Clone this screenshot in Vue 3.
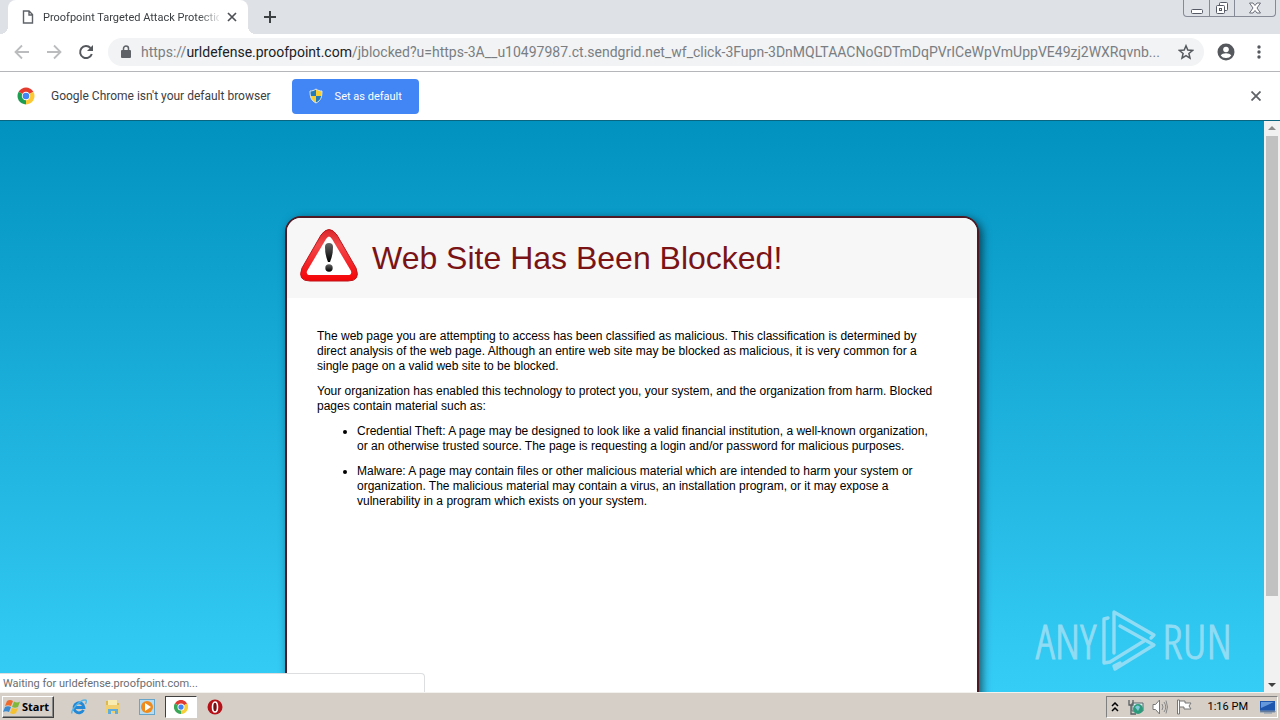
<template>
  <div class="desktop">
    <header class="tab-strip">
      <div class="tab">
        <svg class="page-icon" viewBox="0 0 12 14" width="12" height="14">
          <path d="M1.500 1H7l3.500 3.500V13h-9zM7 1v4h4" fill="none" stroke="#5f6368" stroke-width="1.400" />
        </svg>
        <span class="tab-title">{{ tabTitle }}</span>
        <button class="icon-btn tab-close" aria-label="Close tab">
          <svg viewBox="0 0 10 10" width="10" height="10"><path d="M1 1l8 8M9 1l-8 8" stroke="#4d5156" stroke-width="1.700" /></svg>
        </button>
      </div>
      <button class="icon-btn new-tab" aria-label="New tab">
        <svg viewBox="0 0 12 12" width="12" height="12"><path d="M6 0v12M0 6h12" stroke="#3c4043" stroke-width="2" /></svg>
      </button>
      <div class="window-controls">
        <button aria-label="Minimize">
          <svg viewBox="0 0 12 14" width="12" height="14"><rect x=".5" y="8.500" width="11" height="4" rx="1" fill="#fff" stroke="#565a66" /></svg>
        </button>
        <button aria-label="Restore">
          <svg viewBox="0 0 14 14" width="14" height="14">
            <rect x="4.500" y="1.500" width="8" height="8" rx="1" fill="#fff" stroke="#565a66" />
            <rect x="1.500" y="4.500" width="8" height="8" rx="1" fill="#fff" stroke="#565a66" />
            <rect x="4.500" y="7.500" width="2" height="2" fill="none" stroke="#565a66" />
          </svg>
        </button>
        <button class="wide" aria-label="Close">
          <svg viewBox="0 0 12 12" width="12" height="12">
            <path d="M.5 1h3.500l2 2.500 2-2.500h3.500L8 6l3.500 5H8L6 8.500 4 11H.5L4 6z" fill="#fff" stroke="#6a6e78" />
          </svg>
        </button>
      </div>
    </header>

    <nav class="toolbar">
      <button class="icon-btn nav-btn" aria-label="Back">
        <svg viewBox="0 0 16 16" width="16" height="16"><path d="M15 8H2M8 1.500L1.500 8 8 14.500" fill="none" stroke="#babcbe" stroke-width="1.800" /></svg>
      </button>
      <button class="icon-btn nav-btn" aria-label="Forward">
        <svg viewBox="0 0 16 16" width="16" height="16"><path d="M1 8h13M8 1.500L14.500 8 8 14.500" fill="none" stroke="#babcbe" stroke-width="1.800" /></svg>
      </button>
      <button class="icon-btn nav-btn" aria-label="Reload">
        <svg viewBox="0 0 16 16" width="16" height="16">
          <path d="M13.800 10A6 6 0 1 1 12.500 4" fill="none" stroke="#55585d" stroke-width="2" />
          <path d="M15 1v6H9z" fill="#55585d" />
        </svg>
      </button>
      <div class="omnibox">
        <svg viewBox="0 0 10 13" width="10" height="13">
          <rect y="5" width="10" height="8" rx="1" fill="#5f6368" />
          <path d="M2.500 5V3.500a2.500 2.500 0 0 1 5 0V5" fill="none" stroke="#5f6368" stroke-width="1.500" />
        </svg>
        <div class="url">https://<b>urldefense.proofpoint.com</b>{{ urlPath }}</div>
        <button class="icon-btn" aria-label="Bookmark this page">
          <svg viewBox="0 0 16 16" width="16" height="16">
            <path d="M8 1.800l1.800 4.300 4.700.4-3.600 3 1.100 4.600L8 11.700l-4 2.400 1.100-4.600-3.600-3 4.700-.4z" fill="none" stroke="#55585d" stroke-width="1.500" />
          </svg>
        </button>
      </div>
      <button class="icon-btn profile" aria-label="Profile">
        <svg viewBox="0 0 18 18" width="18" height="18">
          <circle cx="9" cy="9" r="8.500" fill="#55585d" />
          <circle cx="9" cy="6.500" r="2.800" fill="#fff" />
          <path d="M3.700 12.500c1-1.600 3-2.300 5.300-2.300s4.300.7 5.300 2.300A6.300 6.300 0 0 1 9 15a6.300 6.300 0 0 1-5.300-2.500z" fill="#fff" />
        </svg>
      </button>
      <button class="icon-btn menu" aria-label="Menu">
        <svg viewBox="0 0 4 14" width="4" height="14">
          <circle v-for="y in [2, 7, 12]" :key="y" cx="2" :cy="y" r="1.700" fill="#55585d" />
        </svg>
      </button>
    </nav>

    <div class="infobar">
      <svg viewBox="0 0 18 18" width="18" height="18">
        <path d="M9 9L1.640 4.750A8.500 8.500 0 0 1 16.360 4.750z" fill="#e33b2e" />
        <path d="M9 9l7.360-4.250A8.500 8.500 0 0 1 9 17.500z" fill="#fcc934" />
        <path d="M9 9v8.500A8.500 8.500 0 0 1 1.640 4.750z" fill="#1e9e50" />
        <circle cx="9" cy="9" r="4.200" fill="#fff" />
        <circle cx="9" cy="9" r="3.300" fill="#4285f4" />
      </svg>
      <span class="infobar-text">Google Chrome isn't your default browser</span>
      <button class="default-btn">
        <svg viewBox="0 0 14 16" width="14" height="16">
          <path d="M7 1c2 1.500 4 2 6 2 0 6-1 9.500-6 12C2 12.500 1 9 1 3c2 0 4-.5 6-2z" fill="#f7cf35" />
          <path d="M7 1v7H1.300C1 6.500 1 5 1 3c2 0 4-.5 6-2zM7 8h5.700C12 11.500 10.500 13.500 7 15z" fill="#2479b8" />
          <path d="M7 1c2 1.500 4 2 6 2 0 6-1 9.500-6 12C2 12.500 1 9 1 3c2 0 4-.5 6-2z" fill="none" stroke="#d8e4ee" />
        </svg>
        Set as default
      </button>
      <button class="icon-btn infobar-close" aria-label="Dismiss">
        <svg viewBox="0 0 10 10" width="10" height="10"><path d="M.5.5l9 9M9.500.5l-9 9" stroke="#5f6368" stroke-width="1.800" /></svg>
      </button>
    </div>

    <div class="viewport">
      <main class="page">
        <section class="card">
          <div class="card-head">
            <svg viewBox="0 0 60 56" width="60" height="56">
              <defs>
                <linearGradient id="red" x1="0" y1="0" x2="0" y2="1">
                  <stop offset="0" stop-color="#d9252a" />
                  <stop offset=".3" stop-color="#f4474a" />
                  <stop offset="1" stop-color="#f40407" />
                </linearGradient>
                <linearGradient id="mark" x1="0" y1="0" x2="0" y2="1">
                  <stop offset="0" stop-color="#666" />
                  <stop offset="1" stop-color="#000" />
                </linearGradient>
              </defs>
              <path d="M22 7q8-11 16 0l19 33q5 13-8 13H11Q-2 53 3 40z" fill="url(#red)" stroke="#bd171b" />
              <path d="M27 11q3-5 6 0l19 32q1 4-3 4H11q-4 0-3-4z" fill="#fff" />
              <path d="M26 19q0-4 4-4t4 4q0 8-3 15h-2q-3-7-3-15z" fill="url(#mark)" />
              <circle cx="30" cy="40" r="3.700" fill="url(#mark)" />
            </svg>
            <h1>Web Site Has Been Blocked!</h1>
          </div>
          <div class="card-body">
            <p>The web page you are attempting to access has been classified as malicious. This classification is determined by direct analysis of the web page. Although an entire web site may be blocked as malicious, it is very common for a single page on a valid web site to be blocked.</p>
            <p>Your organization has enabled this technology to protect you, your system, and the organization from harm. Blocked pages contain material such as:</p>
            <ul>
              <li v-for="reason in reasons" :key="reason">{{ reason }}</li>
            </ul>
          </div>
        </section>
      </main>
      <div class="scrollbar">
        <span class="arrow up"></span>
        <div class="track"><div class="thumb"></div></div>
        <span class="arrow down"></span>
      </div>
      <div class="watermark">
        <span>ANY</span>
        <svg viewBox="0 0 56 62" width="56" height="62" fill="none" stroke="currentColor" stroke-width="3.400" stroke-linejoin="round" stroke-linecap="round">
          <path d="M7 8L3 9V53L9 52L43 31" />
          <path d="M13 43V2L53 25L50 28" />
          <path d="M19 16L53 35L14 59L13 56L19 53" />
        </svg>
        <span>RUN</span>
      </div>
      <div class="status">Waiting for urldefense.proofpoint.com...</div>
    </div>

    <footer class="taskbar">
      <button class="start">
        <svg viewBox="0 0 18 16" width="18" height="16">
          <path d="M4 2q3-2 6 0L8 7Q5 5.500 2 7z" fill="#ef6a2d" />
          <path d="M11 2.500q3 2 6 0L15 8q-3 1.500-6 0z" fill="#80b83c" />
          <path d="M2 8q3-1.500 6 0l-2 5q-3-1.500-6 0z" fill="#3b8ad0" />
          <path d="M9 9q3 1.500 6 0l-2 5q-3 2-6 0z" fill="#f5c131" />
        </svg>
        Start
      </button>
      <div class="launchers">
        <button aria-label="Internet Explorer">
          <svg viewBox="0 0 16 16" width="16" height="16">
            <path d="M12.500 11A5 5 0 1 1 13 8.500H4" fill="none" stroke="#2389d7" stroke-width="2.800" />
            <path d="M1 14.500C-.5 11 9 1 14 1c2 0 1.500 2 .5 4" fill="none" stroke="#55b5e8" stroke-width="1.400" />
          </svg>
        </button>
        <button aria-label="Explorer">
          <svg viewBox="0 0 16 16" width="16" height="16">
            <path d="M1 2h5l1 2h7v10H1z" fill="#dcb94e" />
            <path d="M3 1h9v8H3z" fill="#f8ecb0" />
            <path d="M1 6h14v8H1z" fill="#f0d070" />
            <path d="M3 15v-5h10v5h-3v-3H6v3z" fill="#5faddc" />
          </svg>
        </button>
        <button aria-label="Media Player">
          <svg viewBox="0 0 16 16" width="16" height="16">
            <rect x=".5" y=".5" width="15" height="15" fill="#b7dcf1" stroke="#68a5cb" />
            <circle cx="8" cy="8" r="6" fill="#ef8b1d" />
            <path d="M6 4l6 4-6 4z" fill="#fff" />
          </svg>
        </button>
        <button class="active" aria-label="Chrome">
          <svg viewBox="0 0 16 16" width="14" height="14">
            <path d="M8 8L1 4a8 8 0 0 1 14 0z" fill="#df3b32" />
            <path d="M8 8l7-4a8 8 0 0 1-7 12z" fill="#f8cf38" />
            <path d="M8 8v8A8 8 0 0 1 1 4z" fill="#3aa757" />
            <circle cx="8" cy="8" r="4" fill="#fff" />
            <circle cx="8" cy="8" r="3" fill="#4285f4" />
          </svg>
        </button>
        <button aria-label="Opera">
          <svg viewBox="0 0 16 16" width="16" height="16">
            <circle cx="8" cy="8" r="7.500" fill="#b51119" />
            <ellipse cx="8" cy="8" rx="2.500" ry="5" fill="#741015" stroke="#fff" stroke-width="1.600" />
          </svg>
        </button>
      </div>
      <div class="tray">
        <svg viewBox="0 0 8 10" width="8" height="10"><path d="M1 4l3-3 3 3M1 9l3-3 3 3" fill="none" stroke="#000" stroke-width="1.500" /></svg>
        <svg viewBox="0 0 17 16" width="17" height="16">
          <path d="M5 4h11v8H5z" fill="#d9eef0" stroke="#5d696c" />
          <path d="M2 1v5h4V1M4 6v9h5" fill="none" stroke="#596063" stroke-width="1.300" />
          <circle cx="11" cy="10" r="5" fill="#2c9b7c" />
          <path d="M8 8q3-3 5 0l-2 4z" fill="#84c9db" />
        </svg>
        <svg viewBox="0 0 16 16" width="16" height="16" fill="none">
          <path d="M1 5.500h2.500L7.500 1v14l-4-4.500H1z" fill="#fff" stroke="#777" />
          <path d="M10 5q2 3 0 6M12 3q3.500 5 0 10M14 1.500q3 6.500 0 13" stroke="#888" />
        </svg>
        <svg viewBox="0 0 16 16" width="16" height="16">
          <path d="M1.500 1h2v14h-2zM3.500 2H9v2h6l-2 3 2 3H8V8H3.500z" fill="#fff" stroke="#777" />
        </svg>
        <time>1:16 PM</time>
        <svg viewBox="0 0 16 14" width="16" height="14">
          <path d="M0 1h15v10H0z" fill="#1f56ad" />
          <path d="M1 2h13L1 8z" fill="#6597db" />
          <path d="M0 11h15v1H0zM4 13h8" fill="#254166" stroke="#7c91ab" />
        </svg>
      </div>
    </footer>
  </div>
</template>

<script setup>
const tabTitle = "Proofpoint Targeted Attack Protectio";

const urlPath = "/jblocked?u=https-3A__u10497987.ct.sendgrid.net_wf_click-3Fupn-3DnMQLTAACNoGDTmDqPVrICeWpVmUppVE49zj2WXRqvnb...";

const reasons = [
  "Credential Theft: A page may be designed to look like a valid financial institution, a well-known organization, or an otherwise trusted source. The page is requesting a login and/or password for malicious purposes.",
  "Malware: A page may contain files or other malicious material which are intended to harm your system or organization. The malicious material may contain a virus, an installation program, or it may expose a vulnerability in a program which exists on your system.",
];
</script>

<style>
body {
  margin: 0;
}
</style>

<style scoped>
.desktop {
  display: flex;
  flex-direction: column;
  height: 100vh;
  overflow: hidden;
  background: #fff;
  font-family: Tahoma, Roboto, sans-serif;
  font-size: 11px;
  color: #3c4043;
}

button {
  font: inherit;
  padding: 0;
  border: none;
  background: none;
}

svg {
  display: block;
  flex-shrink: 0;
}

.icon-btn {
  display: flex;
  align-items: center;
  justify-content: center;
}

.tab-strip {
  flex: 0 0 34px;
  display: flex;
  background: #dee1e6;
  padding-left: 8px;
}

.tab {
  position: relative;
  display: flex;
  align-items: center;
  width: 240px;
  box-sizing: border-box;
  padding: 0 10px 0 14px;
  border-radius: 8px 8px 0 0;
  background: #fff;
}

.tab::before,
.tab::after {
  content: "";
  position: absolute;
  bottom: 0;
  width: 8px;
  height: 8px;
}

.tab::before {
  left: -8px;
  background: radial-gradient(circle at 0 0, #dee1e6 8px, #fff 8px);
}

.tab::after {
  right: -8px;
  background: radial-gradient(circle at 100% 0, #dee1e6 8px, #fff 8px);
}

.tab-title {
  flex: 1;
  min-width: 0;
  margin-left: 9px;
  white-space: nowrap;
  mask-image: linear-gradient(to right, #000 88%, transparent 102%);
}

.tab-close {
  width: 12px;
  margin-left: 7px;
}

.new-tab {
  width: 28px;
  margin-left: 8px;
}

.window-controls {
  display: flex;
  height: 16px;
  margin: 0 4px 0 auto;
  border: 1px solid #868a96;
  border-top: none;
  border-radius: 0 0 4px 4px;
}

.window-controls button {
  width: 25px;
  display: flex;
  align-items: center;
  justify-content: center;
}

.window-controls button + button {
  border-left: 1px solid #868a96;
}

.window-controls .wide {
  width: 41px;
}

.toolbar {
  flex: 0 0 35px;
  display: flex;
  align-items: center;
  padding: 0 15px 2px 6px;
  border-bottom: 1px solid #b4b6ba;
}

.nav-btn {
  width: 32px;
  height: 28px;
}

.omnibox {
  flex: 1;
  min-width: 0;
  height: 28px;
  display: flex;
  align-items: center;
  gap: 10px;
  margin-left: 6px;
  padding: 0 10px 0 13px;
  border-radius: 14px;
  background: #f1f3f4;
}

.url {
  flex: 1;
  white-space: nowrap;
  font-size: 14px;
  color: #7a7e83;
}

.url b {
  font-weight: normal;
  color: #202124;
}

.profile {
  margin-left: 13px;
}

.menu {
  width: 12px;
  margin-left: 18px;
}

.infobar {
  flex: 0 0 48px;
  display: flex;
  align-items: center;
  padding: 0 19px 0 17px;
  border-bottom: 1px solid #0a6580;
}

.infobar-text {
  margin-left: 16px;
  font-size: 12px;
}

.default-btn {
  display: flex;
  align-items: center;
  gap: 12px;
  height: 35px;
  margin-left: 21px;
  padding: 0 17px;
  border-radius: 4px;
  background: #4285f4;
  color: #fff;
}

.infobar-close {
  margin-left: auto;
}

.viewport {
  position: relative;
  flex: 1;
  min-height: 0;
  display: flex;
}

.page {
  flex: 1;
  display: flex;
  justify-content: center;
  padding: 95px 16px 0;
  overflow: hidden;
  background: linear-gradient(#0292c0, #35cdf6);
}

.card {
  flex: 0 1 690px;
  height: 600px;
  border: 2px solid #4f1a24;
  border-radius: 16px;
  background: #fff;
  box-shadow: 3px 3px 10px rgba(0, 0, 0, 0.6);
  overflow: hidden;
  font-family: Arial, "Liberation Sans", sans-serif;
  color: #000;
}

.card-head {
  display: flex;
  align-items: center;
  gap: 13px;
  height: 80px;
  padding-left: 12px;
  background: #f7f7f7;
}

.card-head svg {
  margin-bottom: 4px;
}

h1 {
  margin: 0;
  font-size: 32px;
  font-weight: normal;
  color: #7a1315;
}

.card-body {
  padding: 31px 30px;
  font-size: 12px;
  line-height: 15px;
}

p,
ul,
li {
  margin: 0 0 10px;
}

ul {
  padding: 0 10px 0 40px;
}

.scrollbar {
  display: flex;
  flex-direction: column;
  align-items: center;
  width: 16px;
  background: #f1f1f1;
}

.arrow {
  width: 0;
  margin: 6px 0;
  border: 4px solid transparent;
}

.up {
  margin-top: 1px;
  border-bottom-color: #8a8a8a;
}

.down {
  margin-bottom: 1px;
  border-top-color: #404040;
}

.track {
  flex: 1;
  width: 12px;
}

.thumb {
  height: 85%;
  background: #c1c1c1;
}

.watermark {
  position: absolute;
  right: 48px;
  bottom: 20px;
  display: flex;
  align-items: center;
  gap: 5px;
  font-family: "Open Sans Condensed Light", "Open Sans Condensed", Roboto, sans-serif;
  font-weight: 300;
  font-size: 48px;
  line-height: 62px;
  color: #8fdcf4;
  -webkit-text-stroke: 1px #8fdcf4;
}

.status {
  position: absolute;
  left: 0;
  bottom: 0;
  width: 425px;
  height: 19px;
  box-sizing: border-box;
  padding-left: 3px;
  border: solid #dcdee0;
  border-width: 1px 1px 0 0;
  border-radius: 0 4px 0 0;
  background: #fff;
  line-height: 19px;
  color: #6a6d71;
}

.taskbar {
  flex: 0 0 27px;
  display: flex;
  align-items: center;
  padding: 0 2px;
  border-top: 1px solid #f4f2ee;
  background: #d5cfc7;
  color: #000;
}

.start {
  display: flex;
  align-items: center;
  gap: 1px;
  width: 52px;
  height: 22px;
  box-sizing: border-box;
  border: 1px solid;
  border-color: #fff #404040 #404040 #fff;
  box-shadow: inset -1px -1px #888;
  font-family: Tahoma, "Noto Sans", sans-serif;
  font-weight: bold;
}

.launchers {
  display: flex;
  align-items: center;
  gap: 2px;
  margin-left: 9px;
}

.launchers button {
  width: 32px;
  height: 22px;
  box-sizing: border-box;
  display: flex;
  align-items: center;
  justify-content: center;
}

.launchers .active {
  border: 1px solid;
  border-color: #404040 #fff #fff #404040;
  background: #fff;
}

.tray {
  display: flex;
  align-items: center;
  gap: 8px;
  height: 22px;
  box-sizing: border-box;
  margin-left: auto;
  padding: 0 1px 0 4px;
  border: 1px solid;
  border-color: #808080 #fff #fff #808080;
}

time {
  margin: 0 4px 0 8px;
}
</style>
